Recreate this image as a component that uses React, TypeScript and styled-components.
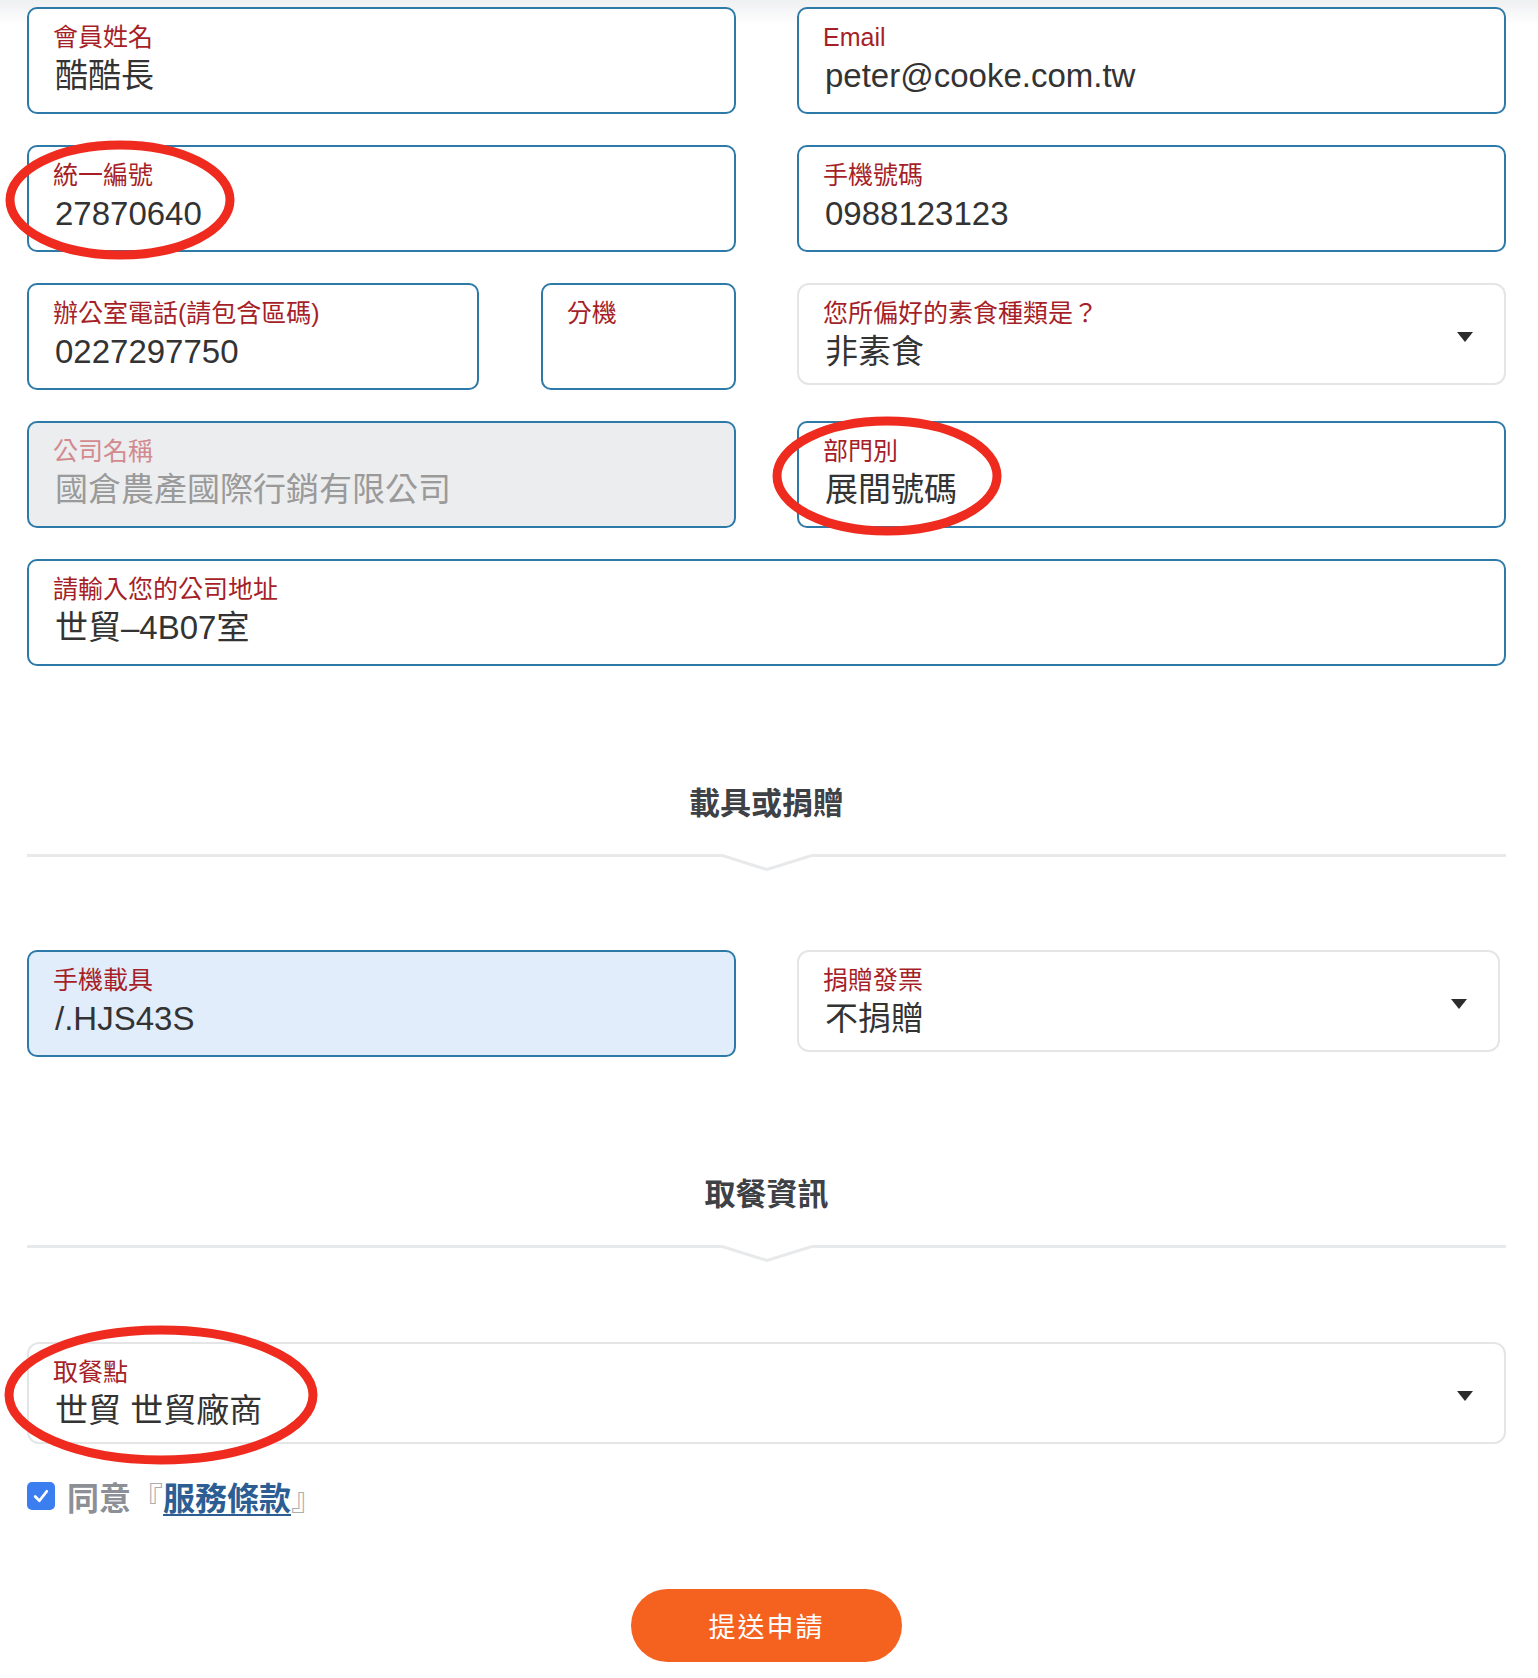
import React from "react";
import styled, { createGlobalStyle } from "styled-components";

const GlobalStyle = createGlobalStyle`
  html, body { margin: 0; padding: 0; }
  body {
    font-family: "Liberation Sans", "Noto Sans CJK TC", sans-serif;
    background: linear-gradient(#eff0f2 0px, #ffffff 26px) no-repeat, #ffffff;
    color: #333;
  }
  * { box-sizing: border-box; }
`;

const Page = styled.div`
  position: relative;
  width: 1538px;
  padding: 7px 32px 14px 27px;
`;

const FormGrid = styled.div<{ $top?: number }>`
  display: grid;
  grid-template-columns: 1fr 1fr;
  column-gap: 61px;
  row-gap: 31px;
  align-items: start;
  margin-top: ${(p) => p.$top ?? 0}px;
`;

const SplitCell = styled.div`
  display: grid;
  grid-template-columns: 451fr 195fr;
  column-gap: 62px;
`;

type Tone = "plain" | "disabled" | "filled";

const Field = styled.div<{ $tone?: Tone; $wide?: boolean }>`
  grid-column: ${(p) => (p.$wide ? "1 / -1" : "auto")};
  height: 107px;
  padding: 13px 24px 18px 24px;
  border: 2px solid #2d79a7;
  border-radius: 10px;
  background: ${(p) =>
    p.$tone === "disabled" ? "#ecedef" : p.$tone === "filled" ? "#e2edfb" : "#ffffff"};
`;

const SelectField = styled.div<{ $wide?: boolean; $trim?: number }>`
  grid-column: ${(p) => (p.$wide ? "1 / -1" : "auto")};
  height: 102px;
  margin-right: ${(p) => p.$trim ?? 0}px;
  padding: 13px 31px 13px 24px;
  border: 2px solid #e4e5e7;
  border-radius: 12px;
  background: #ffffff;
  display: flex;
  align-items: center;
`;

const FieldBody = styled.div`
  flex: 1;
  align-self: flex-start;
`;

const Label = styled.div<{ $muted?: boolean }>`
  font-size: 25px;
  line-height: 30px;
  color: ${(p) => (p.$muted ? "#d28a8f" : "#a61f28")};
  white-space: nowrap;
`;

const Value = styled.div<{ $muted?: boolean }>`
  margin: 4px 0 0 2px;
  height: 40px;
  font-size: 33px;
  line-height: 40px;
  color: ${(p) => (p.$muted ? "#9a9a9a" : "#333333")};
  white-space: nowrap;
`;

const Caret = styled.span`
  width: 0;
  height: 0;
  margin-top: 6px;
  border-left: 8px solid transparent;
  border-right: 8px solid transparent;
  border-top: 10px solid #2c2c2c;
`;

const SectionTitle = styled.h2<{ $top: number }>`
  margin: ${(p) => p.$top}px 0 0;
  text-align: center;
  font-size: 31px;
  line-height: 40px;
  font-weight: 700;
  color: #3e4146;
`;

const Divider = styled.div`
  margin-top: 30px;
  display: flex;
  align-items: flex-start;
  height: 17px;
`;

const DividerLine = styled.div`
  flex: 1;
  height: 3px;
  background: #e8e9eb;
`;

const ChevronSvg = styled.svg`
  display: block;
  flex: none;
`;

const AgreeRow = styled.div`
  margin-top: 32px;
  display: flex;
  align-items: center;
  gap: 12px;
  height: 40px;
`;

const CheckBox = styled.span`
  width: 28px;
  height: 28px;
  border-radius: 5px;
  background: #3a7ef0;
  display: inline-flex;
  align-items: center;
  justify-content: center;
  flex: none;
`;

const AgreeText = styled.span`
  font-family: "Noto Sans CJK TC", sans-serif;
  font-size: 32px;
  line-height: 40px;
  font-weight: 700;
  color: #8c9096;
`;

const Bracket = styled.span`
  font-weight: 400;
  color: #a9acb0;
`;

const TermsLink = styled.a`
  color: #2c5d93;
  text-decoration: underline;
  text-decoration-thickness: 2px;
  text-underline-offset: 4px;
`;

const ButtonRow = styled.div`
  margin-top: 73px;
  display: flex;
  justify-content: center;
`;

const SubmitButton = styled.button`
  width: 271px;
  height: 73px;
  border: none;
  border-radius: 37px;
  background: #f5621f;
  color: #ffffff;
  font-family: "Noto Sans CJK TC", sans-serif;
  font-size: 27px;
  letter-spacing: 2px;
  cursor: pointer;
`;

const Mark = styled.svg`
  position: absolute;
  left: 0;
  top: 0;
  pointer-events: none;
  overflow: visible;
`;

function SectionDivider() {
  return (
    <Divider>
      <DividerLine />
      <ChevronSvg width="90" height="17" viewBox="0 0 90 17">
        <polyline points="0,1.5 45,15.5 90,1.5" fill="none" stroke="#e8e9eb" strokeWidth="3" />
      </ChevronSvg>
      <DividerLine />
    </Divider>
  );
}

function Select({ label, value, wide, trim }: { label: string; value: string; wide?: boolean; trim?: number }) {
  return (
    <SelectField $wide={wide} $trim={trim}>
      <FieldBody>
        <Label>{label}</Label>
        <Value>{value}</Value>
      </FieldBody>
      <Caret />
    </SelectField>
  );
}

export default function App() {
  return (
    <>
      <GlobalStyle />
      <Page>
        <FormGrid>
          <Field>
            <Label>會員姓名</Label>
            <Value>酷酷長</Value>
          </Field>
          <Field>
            <Label>Email</Label>
            <Value>peter@cooke.com.tw</Value>
          </Field>
          <Field>
            <Label>統一編號</Label>
            <Value>27870640</Value>
          </Field>
          <Field>
            <Label>手機號碼</Label>
            <Value>0988123123</Value>
          </Field>
          <SplitCell>
            <Field>
              <Label>辦公室電話(請包含區碼)</Label>
              <Value>0227297750</Value>
            </Field>
            <Field>
              <Label>分機</Label>
              <Value />
            </Field>
          </SplitCell>
          <Select label="您所偏好的素食種類是？" value="非素食" />
          <Field $tone="disabled">
            <Label $muted>公司名稱</Label>
            <Value $muted>國倉農產國際行銷有限公司</Value>
          </Field>
          <Field>
            <Label>部門別</Label>
            <Value>展間號碼</Value>
          </Field>
          <Field $wide>
            <Label>請輸入您的公司地址</Label>
            <Value>世貿–4B07室</Value>
          </Field>
        </FormGrid>

        <SectionTitle $top={118}>載具或捐贈</SectionTitle>
        <SectionDivider />

        <FormGrid $top={79}>
          <Field $tone="filled">
            <Label>手機載具</Label>
            <Value>/.HJS43S</Value>
          </Field>
          <Select label="捐贈發票" value="不捐贈" trim={6} />
        </FormGrid>

        <SectionTitle $top={118}>取餐資訊</SectionTitle>
        <SectionDivider />

        <FormGrid $top={80}>
          <Select label="取餐點" value="世貿 世貿廠商" wide />
        </FormGrid>

        <AgreeRow>
          <CheckBox>
            <svg width="18" height="18" viewBox="0 0 17 17">
              <polyline points="3,9 7,13 14,4" fill="none" stroke="#ffffff" strokeWidth="2.6" strokeLinecap="round" strokeLinejoin="round" />
            </svg>
          </CheckBox>
          <AgreeText>
            同意<Bracket>『</Bracket>
            <TermsLink href="#">服務條款</TermsLink>
            <Bracket>』</Bracket>
          </AgreeText>
        </AgreeRow>

        <ButtonRow>
          <SubmitButton type="button">提送申請</SubmitButton>
        </ButtonRow>

        <Mark width="1538" height="1678">
          <ellipse cx="120" cy="200" rx="110" ry="55" fill="none" stroke="#ef2a1e" strokeWidth="9" />
          <ellipse cx="887" cy="476" rx="110" ry="55" fill="none" stroke="#ef2a1e" strokeWidth="9" />
          <ellipse cx="161" cy="1395" rx="152" ry="65" fill="none" stroke="#ef2a1e" strokeWidth="9" />
        </Mark>
      </Page>
    </>
  );
}
